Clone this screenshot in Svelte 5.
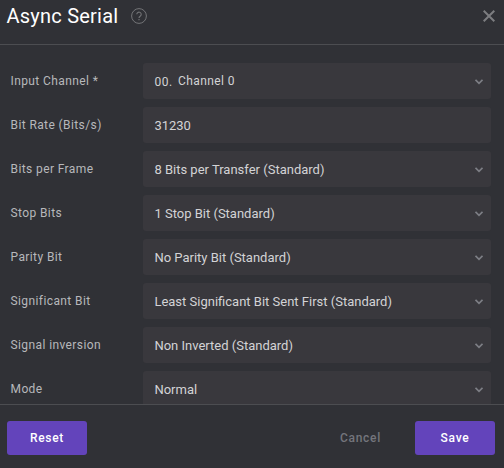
<script>
  const rows = [
    { label: 'Input Channel *', prefix: '00.', value: 'Channel 0', select: true },
    { label: 'Bit Rate (Bits/s)', value: '31230', select: false },
    { label: 'Bits per Frame', value: '8 Bits per Transfer (Standard)', select: true },
    { label: 'Stop Bits', value: '1 Stop Bit (Standard)', select: true },
    { label: 'Parity Bit', value: 'No Parity Bit (Standard)', select: true },
    { label: 'Significant Bit', value: 'Least Significant Bit Sent First (Standard)', select: true },
    { label: 'Signal inversion', value: 'Non Inverted (Standard)', select: true },
    { label: 'Mode', value: 'Normal', select: true },
  ];
</script>

<div class="dialog">
  <header>
    <h1>Async Serial</h1>
    <svg class="help" width="16" height="16" viewBox="0 0 16 16" fill="none" stroke="#747578">
      <circle cx="8" cy="8" r="7.4" />
      <path d="M5.8 6.3a2.2 2.2 0 1 1 3.5 1.8C8.5 8.7 8 9 8 9.9M8 11v1.2" stroke-width="1.1" />
    </svg>
    <svg class="close" width="12" height="12" viewBox="0 0 12 12" fill="none" stroke="#7c7d80" stroke-width="2">
      <path d="M.7.7l10.6 10.6M11.3.7L.7 11.3" />
    </svg>
  </header>

  <main>
    {#each rows as row}
      <div class="row">
        <span class="label">{row.label}</span>
        <div class="field">
          {#if row.prefix}
            <span class="prefix">{row.prefix}</span>
            <span class="channel">{row.value}</span>
          {:else}
            <span class="value">{row.value}</span>
          {/if}
          {#if row.select}
            <svg class="chevron" width="8" height="6" viewBox="0 0 8 6" fill="none" stroke="#7d7e85" stroke-width="1.7">
              <path d="M.5.8L4 4.3 7.5.8" />
            </svg>
          {/if}
        </div>
      </div>
    {/each}
  </main>

  <footer>
    <button class="primary">Reset</button>
    <button class="cancel">Cancel</button>
    <button class="primary">Save</button>
  </footer>
</div>

<style>
  :global(body) {
    margin: 0;
    background: #303136;
  }
  .dialog {
    width: 504px;
    height: 468px;
    display: flex;
    flex-direction: column;
    overflow: hidden;
    background: #303136;
    color: #d3d3d5;
    font-family: Roboto, sans-serif;
  }
  header {
    box-sizing: border-box;
    height: 45px;
    flex: none;
    display: flex;
    align-items: flex-start;
    padding: 0 9px 0 6.5px;
    border-bottom: 1px solid #4c4d51;
  }
  h1 {
    width: 111.5px;
    margin: 4px 0 0;
    font-size: 20px;
    line-height: 24px;
    font-weight: 400;
    letter-spacing: 0.22px;
    color: #fff;
    white-space: nowrap;
  }
  .help {
    margin: 8px 0 0 13px;
  }
  .close {
    margin: 10px 0 0 auto;
  }
  main {
    flex: 1;
    min-height: 0;
    overflow: hidden;
    display: flex;
    flex-direction: column;
    gap: 8px;
    padding: 18px 13px 0 10.5px;
  }
  .row {
    flex: none;
    display: flex;
    height: 36px;
  }
  .label {
    width: 132.5px;
    line-height: 36px;
    font-size: 12px;
    letter-spacing: 0.4px;
    color: #b7b8bb;
    white-space: nowrap;
  }
  .field {
    box-sizing: border-box;
    flex: 1;
    display: flex;
    align-items: center;
    padding: 0 8px 0 11.4px;
    border-radius: 3px;
    background: #39383d;
    font-size: 13px;
    white-space: nowrap;
  }
  .value {
    line-height: 16px;
    padding-top: 1px;
  }
  .prefix {
    width: 23.6px;
    padding-top: 2px;
    font-size: 12px;
    letter-spacing: 0.5px;
  }
  .channel {
    font-size: 12px;
    letter-spacing: 0.4px;
  }
  .chevron {
    margin: 1px 0 0 auto;
  }
  footer {
    box-sizing: border-box;
    flex: none;
    height: 64px;
    display: flex;
    align-items: flex-start;
    padding: 16px 9px 0 7px;
    border-top: 1px solid #4c4d51;
  }
  button {
    height: 34px;
    padding: 0;
    border: 0;
    border-radius: 3px;
    font: 500 12px Roboto, sans-serif;
    letter-spacing: 0.7px;
  }
  .primary {
    width: 80px;
    background: #6344bb;
    color: #fff;
  }
  .cancel {
    width: 80px;
    margin: 0 14.5px 0 auto;
    background: none;
    color: #74757c;
  }
</style>
